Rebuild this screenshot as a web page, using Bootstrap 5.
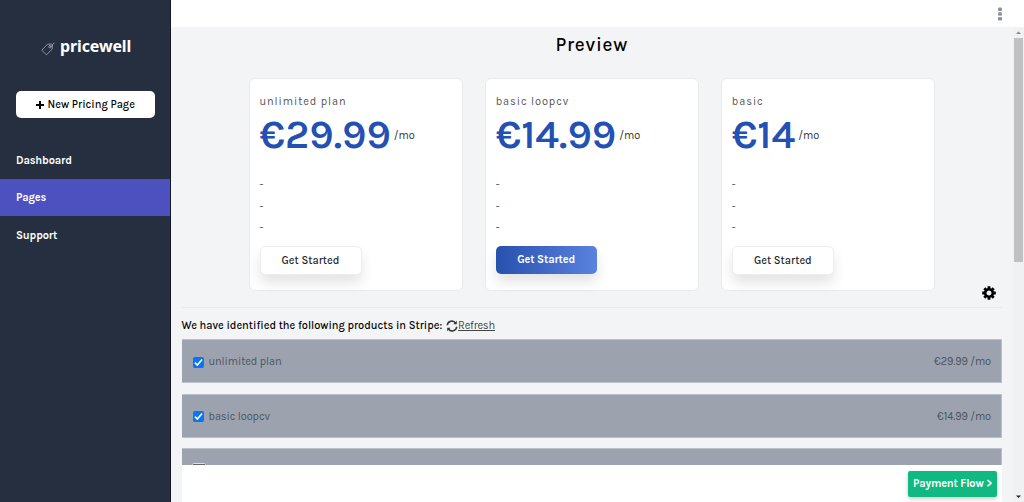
<!DOCTYPE html>
<html lang="en">
<head>
<meta charset="utf-8">
<meta name="viewport" content="width=device-width, initial-scale=1">
<title>Pricewell</title>
<link href="https://cdn.jsdelivr.net/npm/bootstrap@5.3.0/dist/css/bootstrap.min.css" rel="stylesheet">
<style>
body{font-family:Karla,Roboto,"Liberation Sans",sans-serif;font-size:11px;line-height:16px;background:#f3f4f6;color:#000}
.sidebar{width:170.5px;background:#262f40;border-right:1px solid #111827}
.brand{height:27px;margin-top:33px;padding-left:41px;gap:5px}
.brand-name{font-family:"Noto Sans",sans-serif;font-weight:700;font-size:16px;line-height:27px;letter-spacing:-.13px}
.new-page{margin:31px 15px 0 16px;height:27px;border-radius:5px;font-size:11px;font-weight:500;padding:1px 0 0;background:#fff;color:#000;gap:4px}
.menu{margin-top:23.4px}
.menu .nav-link{height:37.5px;padding:1px 16px 0;color:#fff;font-weight:700;font-size:11px;letter-spacing:-.15px}
.menu .nav-link.active{background:#4c51bf}
.topbar{height:27px;padding-right:21px}
.preview-title{font-size:19px;line-height:24px;font-weight:500;letter-spacing:.75px;padding-top:6px;margin:0}
.workspace{padding:0 11px;overflow:hidden}
.plans{gap:22px;margin:21px 67px 0;height:213px}
.plan{border:1px solid #e8eaed;border-radius:6px;padding:15px 10px 0}
.plan-name{letter-spacing:.9px;color:#555;line-height:16px}
.price{font-size:40.6px;line-height:50px;font-weight:600;color:#2350b3}
.per{letter-spacing:0;color:#333;margin-top:1px;margin-left:-1px}
.features{margin-top:14px;line-height:21.5px;color:#555}
.start{width:102px;height:29px;border:1px solid #eceef0;border-radius:5px;font-size:11px;font-weight:500;padding:2px 0 0;background:#fff;box-shadow:0 8px 13px #0000001c;margin-top:7px}
.start.featured{background:linear-gradient(90deg,#2850ad,#5a83e0) border-box;border-color:transparent;color:#fff;font-weight:700;letter-spacing:-.15px;width:101px;height:28px}
.tools{height:17px;padding-right:6px;border-bottom:1px solid #e8eaed}
.settings{margin-top:-5px}
.found{margin-top:10px;height:16px;font-weight:500;letter-spacing:-.02px}
.refresh{color:#444;text-decoration:underline;letter-spacing:-.2px}
.product{height:44px;padding:1px 10px 0 11px;background:#9ca3af;border:1px solid #bcc1ca;border-left:0;color:#4b5563;margin-bottom:10.5px;flex-shrink:0;letter-spacing:-.1px}
.found + .product{margin-top:5.4px}
.product span{padding-top:1px}
.product .form-check-input{width:11px;height:11px;margin:1px 5px 0 0;border-radius:1.5px;float:none;border-color:#777}
.product .form-check-input:checked{background-color:#0875f5;border-color:#0875f5;background-image:url("data:image/svg+xml,%3Csvg xmlns='http://www.w3.org/2000/svg' viewBox='0 0 10 10'%3E%3Cpath d='M1 5.200 3.700 7.800 9 1.700' fill='none' stroke='white' stroke-width='1.900'/%3E%3C/svg%3E")}
.product .form-check-input:not(:checked){width:14px;height:14px;margin:-1px 0 0 -1px;border:1px solid #ddd;background:#666}
.footer-bar{height:37px;left:11px;right:11px;bottom:0;padding-right:5px}
.flow{width:89px;height:26px;background:#10b981;color:#fff;font-size:11px;font-weight:700;border-radius:2px;padding:2px 0 0;letter-spacing:-.16px;box-shadow:0 2px 5px #0003}
.scroll-track{width:11px;background:#f1f1f1}
.scroll-thumb{height:224px;width:9px;background:#c1c1c1}
</style>
</head>
<body class="vh-100 overflow-hidden d-flex">
<aside class="sidebar flex-shrink-0 d-flex flex-column">
  <div class="brand d-flex align-items-center text-white">
    <svg class="mt-1" width="14" height="14" viewBox="0 0 14 14" fill="none" stroke="#9a9fa8" stroke-width=".9"><path d="M.8 8.2 6.5 2.2l4-.2 1 1-.3 4.2-5.8 5.6Z"/><circle cx="9" cy="4.7" r="1.2"/><path d="M9 4.7C11 5.3 10.5 2.5 13.5.8"/></svg>
    <span class="brand-name">pricewell</span>
  </div>
  <button class="new-page btn d-flex align-items-center justify-content-center"><svg width="8" height="8" viewBox="0 0 8 8"><path d="M3 0h2v3h3v2H5v3H3V5H0V3h3z"/></svg><span>New Pricing Page</span></button>
  <nav class="menu nav flex-column">
    <a class="nav-link d-flex align-items-center">Dashboard</a>
    <a class="nav-link active d-flex align-items-center">Pages</a>
    <a class="nav-link d-flex align-items-center">Support</a>
  </nav>
</aside>
<div class="flex-grow-1 d-flex flex-column">
  <header class="topbar bg-white d-flex justify-content-end align-items-center flex-shrink-0">
    <svg width="6" height="14" viewBox="0 0 6 14" fill="#8b929d"><rect x="1" y="0.5" width="4" height="3.6" rx="1.3"/><rect x="1" y="5.2" width="4" height="3.6" rx="1.3"/><rect x="1" y="9.9" width="4" height="3.6" rx="1.3"/></svg>
  </header>
  <div class="d-flex flex-grow-1 overflow-hidden">
    <main class="workspace position-relative flex-grow-1 d-flex flex-column">
      <h1 class="preview-title text-center">Preview</h1>
      <section class="plans d-flex flex-shrink-0">
        <article class="plan bg-white flex-fill w-100">
          <div class="plan-name">unlimited plan</div>
          <div class="d-flex align-items-center gap-1"><span class="price">€29.99</span><span class="per">/mo</span></div>
          <div class="features"><div>-</div><div>-</div><div>-</div></div>
          <button class="btn start">Get Started</button>
        </article>
        <article class="plan bg-white flex-fill w-100">
          <div class="plan-name">basic loopcv</div>
          <div class="d-flex align-items-center gap-1"><span class="price">€14.99</span><span class="per">/mo</span></div>
          <div class="features"><div>-</div><div>-</div><div>-</div></div>
          <button class="btn start featured">Get Started</button>
        </article>
        <article class="plan bg-white flex-fill w-100">
          <div class="plan-name">basic</div>
          <div class="d-flex align-items-center gap-1"><span class="price">€14</span><span class="per">/mo</span></div>
          <div class="features"><div>-</div><div>-</div><div>-</div></div>
          <button class="btn start">Get Started</button>
        </article>
      </section>
      <div class="tools d-flex justify-content-end flex-shrink-0">
        <svg class="settings" width="14" height="14" viewBox="-7 -7 14 14"><circle r="3.8" fill="none" stroke="#000" stroke-width="2.6"/><path d="M0-6.8V-4M0 4v2.8M-6.8 0H-4M4 0h2.8M-4.7-4.7l1.900 1.900M2.800 2.800l1.900 1.900M-4.700 4.700l1.900-1.900M2.800-2.800l1.900-1.900" stroke="#000" stroke-width="2.8"/></svg>
      </div>
      <div class="found d-flex align-items-center flex-shrink-0">
        <span>We have identified the following products in Stripe:</span>
        <svg class="ms-1" width="12" height="12" viewBox="0 0 12 12" fill="none" stroke="#333" stroke-width="1.5"><path d="M1.3 5.2A4.5 4.5 0 0 1 9.6 3.2M10.7 6.8A4.5 4.5 0 0 1 2.4 8.8"/><path d="M10.8.8v3.4H7.4zM1.2 11.2V7.8h3.4z" fill="#333" stroke="none"/></svg>
        <a class="refresh fw-normal">Refresh</a>
      </div>
      <div class="product d-flex align-items-center"><input class="form-check-input" type="checkbox" checked><span>unlimited plan</span><span class="ms-auto">€29.99 /mo</span></div>
      <div class="product d-flex align-items-center"><input class="form-check-input" type="checkbox" checked><span>basic loopcv</span><span class="ms-auto">€14.99 /mo</span></div>
      <div class="product d-flex align-items-center"><input class="form-check-input" type="checkbox"></div>
      <footer class="footer-bar position-absolute bg-white d-flex align-items-center justify-content-end"><button class="btn flow">Payment Flow &gt;</button></footer>
    </main>
    <div class="scroll-track d-flex flex-column align-items-center flex-shrink-0">
      <svg width="11" height="11" viewBox="0 0 11 11"><path d="M3 7h5L5.500 4.500z" fill="#888"/></svg>
      <div class="scroll-thumb"></div>
      <svg class="mt-auto" width="11" height="11" viewBox="0 0 11 11"><path d="M3 4.500h5L5.500 7z" fill="#222"/></svg>
    </div>
  </div>
</div>
<script src="https://cdn.jsdelivr.net/npm/bootstrap@5.3.0/dist/js/bootstrap.bundle.min.js"></script>
</body>
</html>
